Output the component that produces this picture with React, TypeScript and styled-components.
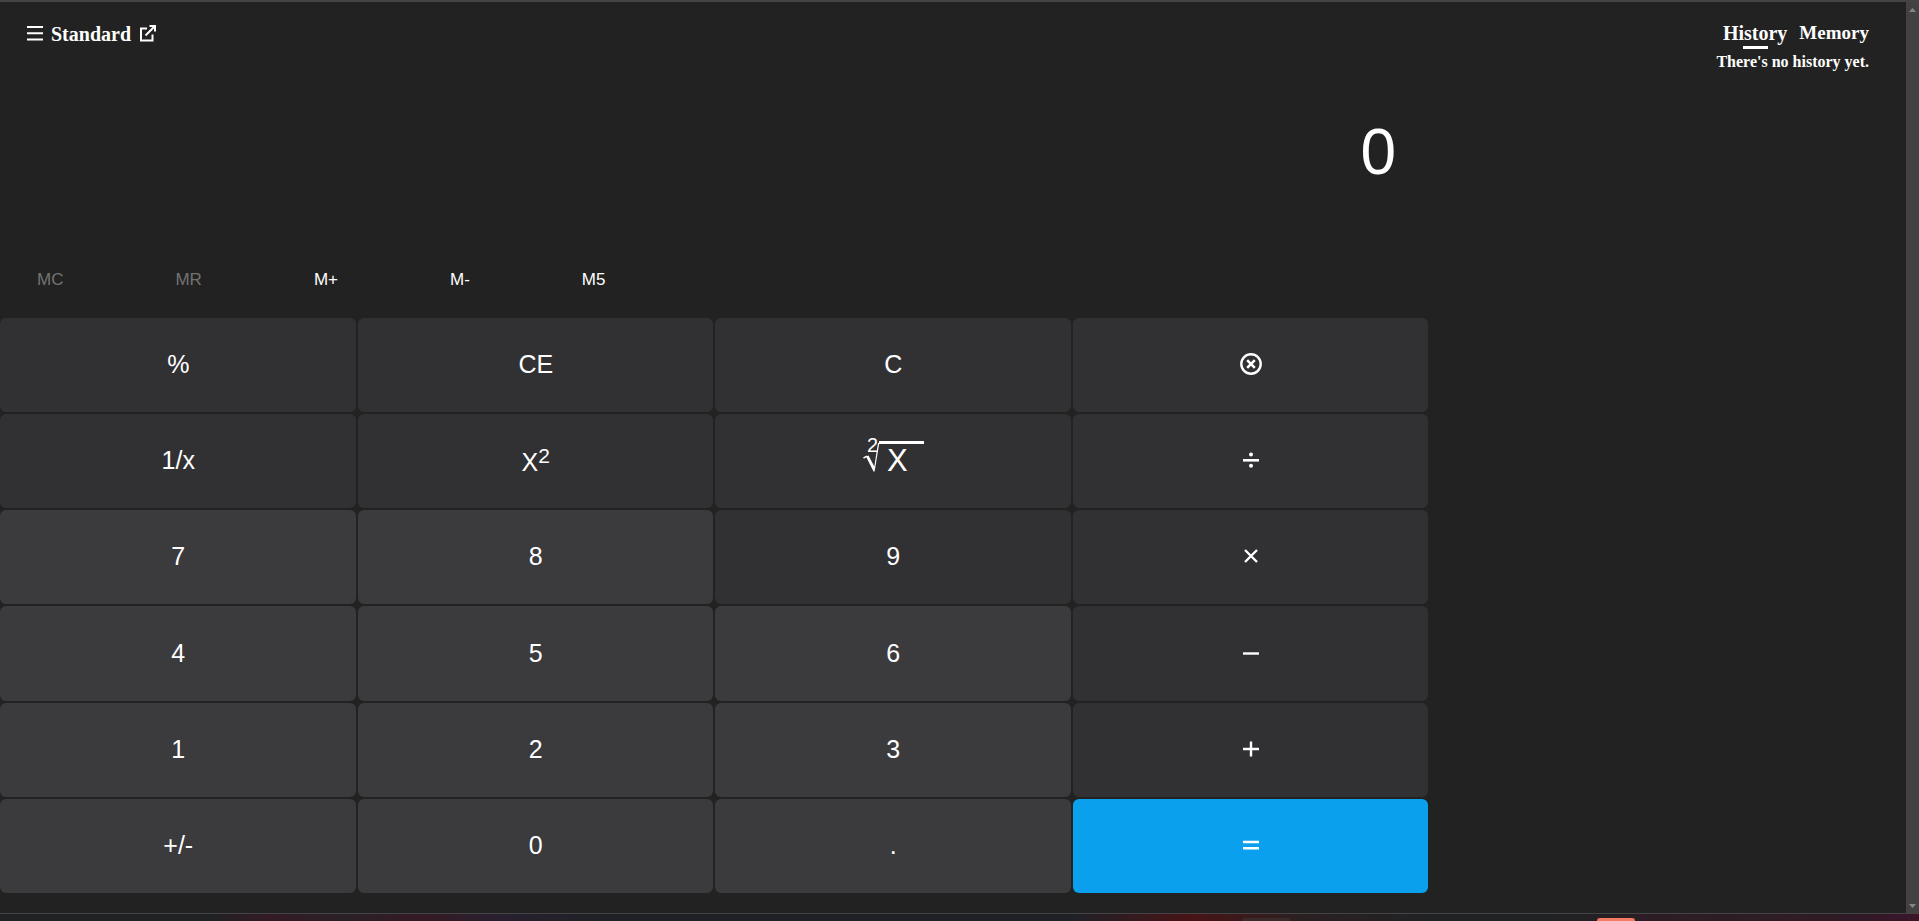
import React, { useState } from 'react';
import styled, { createGlobalStyle } from 'styled-components';

const GlobalStyle = createGlobalStyle`
  * { box-sizing: border-box; }
  body { margin: 0; background: #222222; color: #ffffff; }
`;

const Screen = styled.div`
  display: flex;
  flex-direction: column;
  height: 100vh;
  min-height: 640px;
  border-top: 2px solid #444444;
  font-family: 'Liberation Serif', 'Times New Roman', serif;
`;

const Content = styled.div`
  flex: 1;
  min-height: 0;
  display: flex;
`;

const Main = styled.main`
  flex: 1;
  display: grid;
  grid-template-columns: minmax(0, 3fr) minmax(0, 1fr);
  gap: 2px;
`;

const Calculator = styled.section`
  display: flex;
  flex-direction: column;
  padding-bottom: 20px;
`;

const Header = styled.header`
  display: flex;
  align-items: center;
  height: 64px;
  padding: 0 27px;
`;

const IconButton = styled.button`
  display: flex;
  padding: 0 0 2px;
  border: 0;
  background: none;
  color: inherit;
  cursor: pointer;
`;

const Title = styled.h1`
  margin: 0 8px 0 7px;
  font-size: 20px;
  line-height: 24px;
`;

const Display = styled.output`
  height: 172px;
  padding: 46px 32px 0;
  font-family: 'Liberation Sans', Arial, sans-serif;
  font-size: 64px;
  line-height: 80px;
  text-align: right;
`;

const MemoryBar = styled.div`
  display: flex;
  align-items: center;
  gap: 112px;
  height: 80px;
  padding: 4px 37px 0;
`;

const MemoryButton = styled.button`
  padding: 0;
  border: 0;
  background: none;
  color: #ffffff;
  font: 17px/24px 'Liberation Sans', Arial, sans-serif;
  cursor: pointer;
  &:disabled { color: #737373; }
`;

const Keypad = styled.div`
  flex: 1;
  display: grid;
  grid-template-columns: repeat(4, 1fr);
  grid-auto-rows: 1fr;
  gap: 2px;
`;

type Tone = 'dark' | 'light' | 'accent';
const tones: Record<Tone, string> = { dark: '#313133', light: '#3b3b3d', accent: '#0aa0ee' };

const Key = styled.button<{ $tone: Tone }>`
  display: flex;
  align-items: center;
  justify-content: center;
  padding: 0 0 2px 1px;
  border: 0;
  border-radius: 6px;
  background: ${({ $tone }) => tones[$tone]};
  color: #ffffff;
  font: 25px/32px 'Liberation Sans', Arial, sans-serif;
  cursor: pointer;
  sup { font-size: 21px; line-height: 26px; vertical-align: 8px; }
`;

const Side = styled.aside`
  display: flex;
  flex-direction: column;
  align-items: flex-end;
  padding: 18px 37px 0 0;
`;

const Tabs = styled.div`
  display: flex;
  align-items: flex-start;
  gap: 12px;
  height: 30px;
`;

const Tab = styled.button<{ $active?: boolean }>`
  display: flex;
  flex-direction: column;
  align-items: center;
  padding: 0;
  border: 0;
  background: none;
  color: #ffffff;
  font: bold ${({ $active }) => ($active ? 20 : 19)}px/26px 'Liberation Serif', 'Times New Roman', serif;
  cursor: pointer;
  &::after {
    content: '';
    width: 25px;
    height: ${({ $active }) => ($active ? 3 : 0)}px;
    background: #ffffff;
  }
`;

const Note = styled.p`
  margin: 0;
  font-size: 16px;
  line-height: 24px;
  font-weight: bold;
`;

const ScrollTrack = styled.div`
  display: flex;
  flex-direction: column;
  align-items: center;
  justify-content: space-between;
  width: 13px;
  padding: 6px 0 5px;
  background: #424242;
`;

const Taskbar = styled.footer`
  display: flex;
  flex: none;
  height: 8px;
  border-top: 1px solid #444346;
  background: linear-gradient(90deg,
    #202224 0%, #202224 11%, #341a26 14%, #2b2028 18%, #351a24 22%, #28202f 26%,
    #202127 31%, #202127 56%, #481416 62%, #2a2022 68%, #202224 75%, #202224 81%, #2c1d25 86%, #2f1b26 96%, #3a152a 100%);
`;

const TaskSlot = styled.span<{ $active?: boolean }>`
  width: ${({ $active }) => ($active ? 38 : 48)}px;
  height: 3px;
  margin-top: 4px;
  margin-left: ${({ $active }) => ($active ? '16%' : '64.7%')};
  border-radius: 4px 4px 0 0;
  background: ${({ $active }) => ($active ? '#f47c63' : '#3a2a2c')};
`;

const MenuIcon = () => (
  <svg width="17" height="16" viewBox="0 0 17 16" fill="none" stroke="#fff" strokeWidth="1.9">
    <path d="M0 2h16M0 8.300h16M0 14.500h16" />
  </svg>
);

const PopOutIcon = () => (
  <svg width="18" height="18" viewBox="0 0 18 18" fill="none" stroke="#fff" strokeWidth="2">
    <path d="M8 4.500H2v12h11.500v-6M6.500 11.500L16 2M10.500 2H16v5.500" />
  </svg>
);

const ClearIcon = () => (
  <svg width="22" height="22" viewBox="0 0 22 22" fill="none" stroke="#fff" strokeWidth="2.4">
    <circle cx="11" cy="11" r="9.7" />
    <path d="M7.200 7.200l7.600 7.600M14.800 7.200l-7.600 7.600" strokeWidth="2.6" />
  </svg>
);

const RootIcon = () => (
  <svg width="62" height="56" viewBox="0 -6 62 56" fill="#fff">
    <text x="5" y="14" fontSize="20">2</text>
    <text x="25" y="33" fontSize="31">X</text>
    <path d="M1.500 20L5 18.200" fill="none" stroke="#fff" strokeWidth="1.500" />
    <path d="M4 18.500L6.500 17.500L12.300 28.500L16 5h1.300L12.600 33.500H11.500z" />
    <path d="M17 4.500h45" stroke="#fff" strokeWidth="3" />
  </svg>
);

const DivideIcon = () => (
  <svg width="16" height="16" viewBox="0 0 16 16" fill="#fff">
    <path d="M0 7h16v2.600H0z" />
    <circle cx="8" cy="2.500" r="2" />
    <circle cx="8" cy="13.700" r="2" />
  </svg>
);

const LineIcon = ({ d }: { d: string }) => (
  <svg width="16" height="16" viewBox="0 0 16 16" fill="none" stroke="#fff" strokeWidth="2.400">
    <path d={d} />
  </svg>
);

const keys: { name: string; face?: React.ReactNode; tone: Tone }[] = [
  { name: '%', tone: 'dark' },
  { name: 'CE', tone: 'dark' },
  { name: 'C', tone: 'dark' },
  { name: 'Backspace', face: <ClearIcon />, tone: 'dark' },
  { name: '1/x', tone: 'dark' },
  { name: 'Square', face: <span>X<sup>2</sup></span>, tone: 'dark' },
  { name: 'Square root', face: <RootIcon />, tone: 'dark' },
  { name: 'Divide', face: <DivideIcon />, tone: 'dark' },
  { name: '7', tone: 'light' },
  { name: '8', tone: 'light' },
  { name: '9', tone: 'dark' },
  { name: 'Multiply', face: <LineIcon d="M2 2l12 12M14 2l-12 12" />, tone: 'dark' },
  { name: '4', tone: 'light' },
  { name: '5', tone: 'light' },
  { name: '6', tone: 'light' },
  { name: 'Subtract', face: <LineIcon d="M0 8.500h16" />, tone: 'dark' },
  { name: '1', tone: 'light' },
  { name: '2', tone: 'light' },
  { name: '3', tone: 'light' },
  { name: 'Add', face: <LineIcon d="M0 8h16M8 .500v15" />, tone: 'dark' },
  { name: '+/-', tone: 'light' },
  { name: '0', tone: 'light' },
  { name: '.', tone: 'light' },
  { name: 'Equals', face: <LineIcon d="M0 5h16M0 11.300h16" />, tone: 'accent' },
];

export default function App() {
  const [value, setValue] = useState('0');
  const press = (name: string) => {
    if (/^\d$/.test(name)) setValue((v) => (v === '0' ? name : v + name));
    if (name === 'C' || name === 'CE') setValue('0');
  };

  return (
    <Screen>
      <GlobalStyle />
      <Content>
        <Main>
          <Calculator>
            <Header>
              <IconButton aria-label="Open menu"><MenuIcon /></IconButton>
              <Title>Standard</Title>
              <IconButton aria-label="Keep on top"><PopOutIcon /></IconButton>
            </Header>
            <Display>{value}</Display>
            <MemoryBar>
              <MemoryButton disabled>MC</MemoryButton>
              <MemoryButton disabled>MR</MemoryButton>
              <MemoryButton>M+</MemoryButton>
              <MemoryButton>M-</MemoryButton>
              <MemoryButton>M5</MemoryButton>
            </MemoryBar>
            <Keypad>
              {keys.map(({ name, face, tone }) => (
                <Key key={name} $tone={tone} aria-label={name} onClick={() => press(name)}>
                  {face ?? name}
                </Key>
              ))}
            </Keypad>
          </Calculator>
          <Side>
            <Tabs>
              <Tab $active>History</Tab>
              <Tab>Memory</Tab>
            </Tabs>
            <Note>There's no history yet.</Note>
          </Side>
        </Main>
        <ScrollTrack aria-hidden="true">
          <svg width="7" height="4" viewBox="0 0 7 4" fill="#868686"><path d="M0 4L3.500 0 7 4z" /></svg>
          <svg width="7" height="4" viewBox="0 0 7 4" fill="#868686"><path d="M0 0h7L3.500 4z" /></svg>
        </ScrollTrack>
      </Content>
      <Taskbar>
        <TaskSlot />
        <TaskSlot $active />
      </Taskbar>
    </Screen>
  );
}
